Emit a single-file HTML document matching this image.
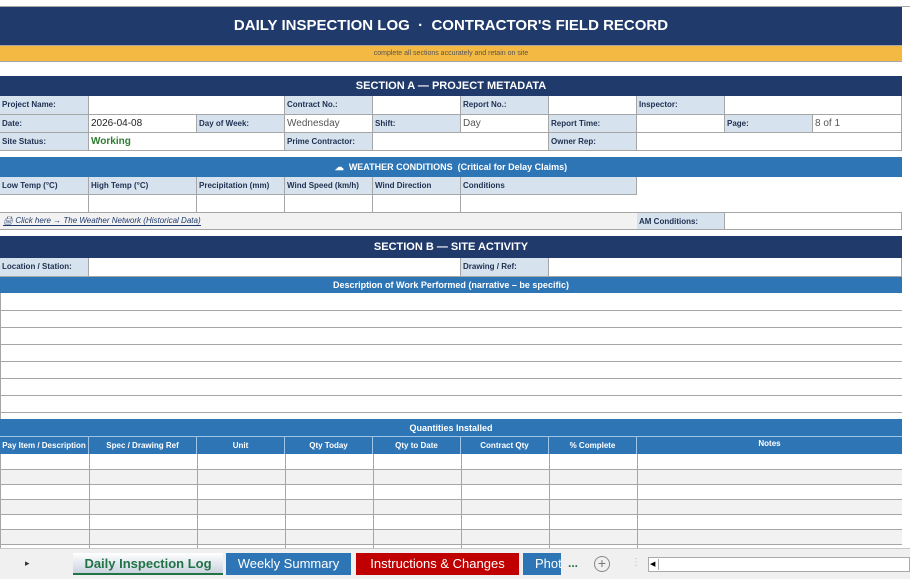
<!DOCTYPE html>
<html><head><meta charset="utf-8"><style>
*{margin:0;padding:0;box-sizing:border-box}
body{width:910px;height:579px;overflow:hidden;background:#fff;font-family:"Liberation Sans",Arial,sans-serif;position:relative}
div{position:absolute}
.bar{left:0;width:902px;color:#fff;font-weight:bold;text-align:center}
.navy{background:#1f3a6b}
.blue{background:#2e75b6}
.l{background:#d6e3ef;border-right:1px solid #a6a6a6;border-bottom:1px solid #a6a6a6;font-size:8px;font-weight:bold;color:#1f2f4f;padding:4px 0 0 2px}
.v{background:#fff;border-right:1px solid #a6a6a6;border-bottom:1px solid #a6a6a6;font-size:10px;padding:3px 0 0 2px;color:#333}
.hl{left:0;width:902px;height:1px;background:#a6a6a6}
.vl{width:1px;background:#a6a6a6}
.qh{top:437px;height:17px;border-right:1px solid #9dc3e6;font-size:8px;color:#fff;font-weight:bold;text-align:center;padding-top:4px}
.tab{top:553px;height:22px;font-size:13px;text-align:center;padding-top:3px;color:#fff}
</style></head><body>
<div style="left:0;top:6px;width:910px;height:1px;background:#a6a6a6"></div>
<div class="bar navy" style="top:7px;height:38px;font-size:15px;padding-top:10px">DAILY INSPECTION LOG &nbsp;·&nbsp; CONTRACTOR'S FIELD RECORD</div>
<div class="bar" style="top:45px;height:17px;background:#f4b942;border-top:1px solid #a6a6a6;border-bottom:1px solid #a6a6a6;color:#555;font-weight:normal;font-size:7px;padding-top:4px">complete all sections accurately and retain on site</div>
<div class="bar navy" style="top:76px;height:20px;font-size:11px;padding-top:4px">SECTION A — PROJECT METADATA</div>
<!-- row1 -->
<div class="l" style="left:0;top:96px;width:89px;height:19px">Project Name:</div>
<div class="v" style="left:89px;top:96px;width:196px;height:19px"></div>
<div class="l" style="left:285px;top:96px;width:88px;height:19px">Contract No.:</div>
<div class="v" style="left:373px;top:96px;width:88px;height:19px"></div>
<div class="l" style="left:461px;top:96px;width:88px;height:19px">Report No.:</div>
<div class="v" style="left:549px;top:96px;width:88px;height:19px"></div>
<div class="l" style="left:637px;top:96px;width:88px;height:19px">Inspector:</div>
<div class="v" style="left:725px;top:96px;width:177px;height:19px"></div>
<!-- row2 -->
<div class="l" style="left:0;top:115px;width:89px;height:18px">Date:</div>
<div class="v" style="left:89px;top:115px;width:108px;height:18px;color:#222">2026-04-08</div>
<div class="l" style="left:197px;top:115px;width:88px;height:18px">Day of Week:</div>
<div class="v" style="left:285px;top:115px;width:88px;height:18px;color:#555">Wednesday</div>
<div class="l" style="left:373px;top:115px;width:88px;height:18px">Shift:</div>
<div class="v" style="left:461px;top:115px;width:88px;height:18px;color:#555">Day</div>
<div class="l" style="left:549px;top:115px;width:88px;height:18px">Report Time:</div>
<div class="v" style="left:637px;top:115px;width:88px;height:18px"></div>
<div class="l" style="left:725px;top:115px;width:88px;height:18px">Page:</div>
<div class="v" style="left:813px;top:115px;width:89px;height:18px;color:#555">8 of 1</div>
<!-- row3 -->
<div class="l" style="left:0;top:133px;width:89px;height:18px">Site Status:</div>
<div class="v" style="left:89px;top:133px;width:196px;height:18px;color:#2e7d32;font-weight:bold">Working</div>
<div class="l" style="left:285px;top:133px;width:88px;height:18px">Prime Contractor:</div>
<div class="v" style="left:373px;top:133px;width:176px;height:18px"></div>
<div class="l" style="left:549px;top:133px;width:88px;height:18px">Owner Rep:</div>
<div class="v" style="left:637px;top:133px;width:265px;height:18px"></div>
<!-- weather -->
<div class="bar blue" style="top:157px;height:20px;font-size:9px;padding-top:5px">☁ &nbsp;WEATHER CONDITIONS &nbsp;(Critical for Delay Claims)</div>
<div class="l" style="left:0;top:177px;width:89px;height:18px">Low Temp (°C)</div>
<div class="l" style="left:89px;top:177px;width:108px;height:18px">High Temp (°C)</div>
<div class="l" style="left:197px;top:177px;width:88px;height:18px">Precipitation (mm)</div>
<div class="l" style="left:285px;top:177px;width:88px;height:18px">Wind Speed (km/h)</div>
<div class="l" style="left:373px;top:177px;width:88px;height:18px">Wind Direction</div>
<div class="l" style="left:461px;top:177px;width:176px;height:18px">Conditions</div>
<div class="v" style="left:0;top:195px;width:89px;height:18px"></div>
<div class="v" style="left:89px;top:195px;width:108px;height:18px"></div>
<div class="v" style="left:197px;top:195px;width:88px;height:18px"></div>
<div class="v" style="left:285px;top:195px;width:88px;height:18px"></div>
<div class="v" style="left:373px;top:195px;width:88px;height:18px"></div>
<div class="v" style="left:461px;top:195px;width:441px;height:18px;border-right:none"></div>
<div style="left:0;top:213px;width:637px;height:17px;background:#f2f2f2;border-bottom:1px solid #a6a6a6;font-size:8px;font-style:italic;color:#1f3a6b;padding:3px 0 0 3px"><span style="border-bottom:1px solid #1f3a6b">🖨 Click here → The Weather Network (Historical Data)</span></div>
<div class="l" style="left:637px;top:213px;width:88px;height:17px">AM Conditions:</div>
<div class="v" style="left:725px;top:213px;width:177px;height:17px"></div>
<!-- section B -->
<div class="bar navy" style="top:236px;height:22px;font-size:11px;padding-top:5px">SECTION B — SITE ACTIVITY</div>
<div class="l" style="left:0;top:258px;width:89px;height:19px">Location / Station:</div>
<div class="v" style="left:89px;top:258px;width:372px;height:19px"></div>
<div class="l" style="left:461px;top:258px;width:88px;height:19px">Drawing / Ref:</div>
<div class="v" style="left:549px;top:258px;width:353px;height:19px"></div>
<div class="bar blue" style="top:277px;height:16px;font-size:9px;padding-top:3px">Description of Work Performed (narrative – be specific)</div>
<div class="hl" style="top:310px"></div><div class="hl" style="top:327px"></div><div class="hl" style="top:344px"></div>
<div class="hl" style="top:361px"></div><div class="hl" style="top:378px"></div><div class="hl" style="top:395px"></div><div class="hl" style="top:412px"></div>
<div class="vl" style="left:0;top:293px;height:126px"></div>
<!-- quantities -->
<div class="bar blue" style="top:419px;height:18px;font-size:9px;padding-top:4px;border-bottom:1px solid #9dc3e6">Quantities Installed</div>
<div class="blue" style="left:0;top:437px;width:902px;height:17px"></div>
<div class="qh" style="left:0;width:89px">Pay Item / Description</div>
<div class="qh" style="left:89px;width:108px">Spec / Drawing Ref</div>
<div class="qh" style="left:197px;width:88px">Unit</div>
<div class="qh" style="left:285px;width:88px">Qty Today</div>
<div class="qh" style="left:373px;width:88px">Qty to Date</div>
<div class="qh" style="left:461px;width:88px">Contract Qty</div>
<div class="qh" style="left:549px;width:88px">% Complete</div>
<div class="qh" style="left:637px;width:265px;border:none;padding-top:2px">Notes</div>
<div style="left:0;top:469px;width:902px;height:15px;background:#f2f2f2"></div>
<div style="left:0;top:499px;width:902px;height:15px;background:#f2f2f2"></div>
<div style="left:0;top:529px;width:902px;height:15px;background:#f2f2f2"></div>
<div class="hl" style="top:469px"></div><div class="hl" style="top:484px"></div><div class="hl" style="top:499px"></div>
<div class="hl" style="top:514px"></div><div class="hl" style="top:529px"></div><div class="hl" style="top:544px"></div>
<div class="vl" style="left:0;top:454px;height:94px"></div>
<div class="vl" style="left:89px;top:454px;height:94px"></div>
<div class="vl" style="left:197px;top:454px;height:94px"></div>
<div class="vl" style="left:285px;top:454px;height:94px"></div>
<div class="vl" style="left:373px;top:454px;height:94px"></div>
<div class="vl" style="left:461px;top:454px;height:94px"></div>
<div class="vl" style="left:549px;top:454px;height:94px"></div>
<div class="vl" style="left:637px;top:454px;height:94px"></div>
<!-- tab bar -->
<div style="left:0;top:548px;width:910px;height:31px;background:#f0f0f0;border-top:1px solid #c8c8c8"></div>
<div style="left:25px;top:558px;font-size:9px;color:#333">▸</div>
<div class="tab" style="left:73px;width:150px;background:linear-gradient(#fff,#c9d3df);color:#217346;font-weight:bold;border-bottom:2px solid #217346">Daily Inspection Log</div>
<div class="tab" style="left:226px;width:125px;background:#2e75b6">Weekly Summary</div>
<div class="tab" style="left:356px;width:163px;background:#c00000">Instructions &amp; Changes</div>
<div class="tab" style="left:523px;width:38px;background:#2e75b6;text-align:left;padding-left:12px;overflow:hidden">Phot</div>
<div style="left:568px;top:556px;font-size:12px;color:#217346;font-weight:bold">...</div>
<div style="left:594px;top:556px;width:16px;height:16px;border:1px solid #888;border-radius:50%;font-size:14px;line-height:13px;text-align:center;color:#777">+</div>
<div style="left:631px;top:557px;font-size:10px;color:#bbb">⋮</div>
<div style="left:648px;top:557px;width:262px;height:15px;background:#fff;border:1px solid #aaa"></div>
<div style="left:650px;top:559px;width:9px;height:11px;border-right:1px solid #aaa;font-size:7px;line-height:11px">◀</div>
</body></html>
